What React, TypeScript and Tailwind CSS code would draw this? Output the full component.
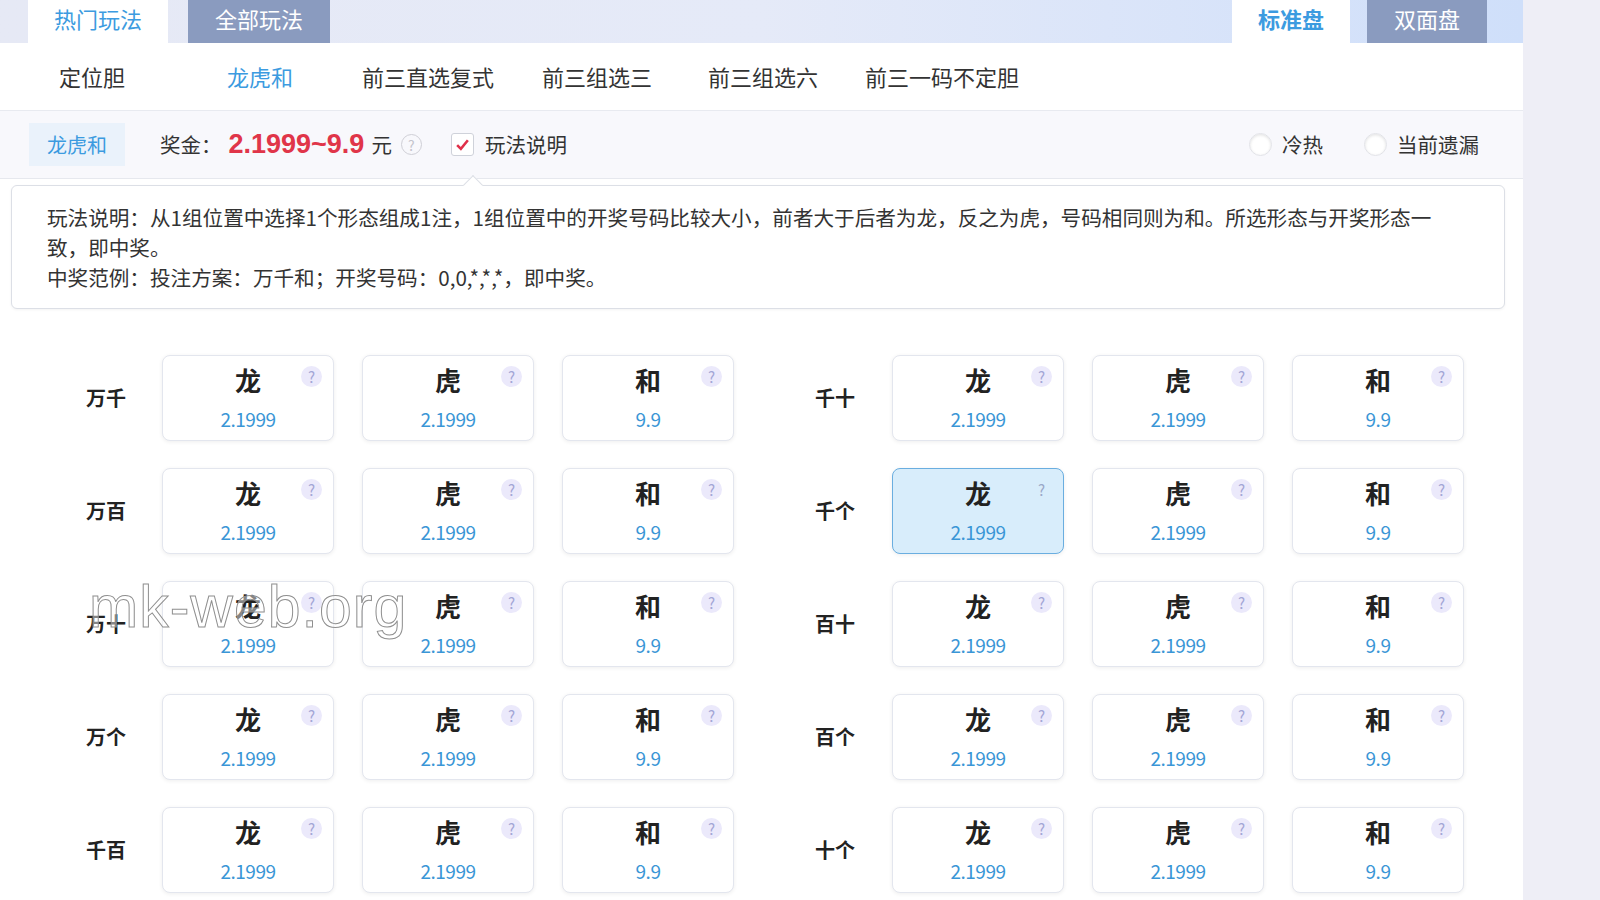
import React from "react";

const cjk = "font-['Microsoft_YaHei','Noto_Sans_CJK_SC',sans-serif]";

const subTabs = ["定位胆", "龙虎和", "前三直选复式", "前三组选三", "前三组选六", "前三一码不定胆"];
const subTabW = ["w-[168px]", "w-[135px]", "w-[180px]", "w-[166px]", "w-[157px]", "w-auto"];

const leftRows = ["万千", "万百", "万十", "万个", "千百"];
const rightRows = ["千十", "千个", "百十", "百个", "十个"];
const options = [
  { name: "龙", odds: "2.1999" },
  { name: "虎", odds: "2.1999" },
  { name: "和", odds: "9.9" },
];

function Card({ name, odds, active }: { name: string; odds: string; active?: boolean }) {
  return (
    <div
      className={`relative flex h-[86px] w-[172px] flex-col items-center rounded-[8px] border shadow-[0_1px_4px_rgba(0,0,0,0.07)] ${
        active ? "border-[#6aaee0] bg-[#d8edfb]" : "border-[#e3e6ee] bg-white"
      }`}
    >
      <div className="mt-[8px] text-[26px] leading-[32px] font-bold text-[#222]">{name}</div>
      <div className="mt-[12px] text-[19px] leading-[22px] tracking-[-0.5px] text-[#3a96d6]">{odds}</div>
      <span
        className={`absolute right-[11px] top-[10px] flex h-[21px] w-[21px] items-center justify-center rounded-full text-[15px] leading-none ${
          active ? "text-[#9aa8c8]" : "bg-[#ebe9fb] text-[#a3a6d6]"
        }`}
      >
        ?
      </span>
    </div>
  );
}

function Group({ labels, activeRow, gapRight }: { labels: string[]; activeRow?: number; gapRight: string }) {
  return (
    <div className="flex flex-col gap-[27px]">
      {labels.map((label, r) => (
        <div key={label} className="flex items-center">
          <div className={`${gapRight} w-[90px] text-center text-[20px] font-bold text-[#222]`}>{label}</div>
          <div className="flex gap-[28px]">
            {options.map((o, i) => (
              <Card key={o.name} name={o.name} odds={o.odds} active={r === activeRow && i === 0} />
            ))}
          </div>
        </div>
      ))}
    </div>
  );
}

export default function App() {
  return (
    <div className={`flex h-[900px] w-[1600px] overflow-hidden bg-[#eeeef6] ${cjk}`}>
      <div className="relative h-full w-[1523px] bg-white">
        {/* top tabs */}
        <div className="flex h-[43px] items-end bg-gradient-to-r from-[#e6e9f5] via-[#e5eaf8] to-[#cfdffa]">
          <div className="ml-[28px] flex h-[43px] w-[140px] items-center justify-center bg-white pb-[6px] text-[22px] text-[#3c9be0]">
            热门玩法
          </div>
          <div className="ml-[20px] flex h-[43px] w-[142px] items-center justify-center bg-[#8a9bbf] pb-[6px] text-[22px] text-white">
            全部玩法
          </div>
          <div className="flex-1" />
          <div className="flex h-[43px] w-[118px] items-center justify-center bg-white pb-[6px] text-[22px] font-bold text-[#3c9be0]">
            标准盘
          </div>
          <div className="ml-[17px] flex h-[43px] w-[120px] items-center justify-center bg-[#8a9bbf] pb-[6px] text-[22px] text-white">
            双面盘
          </div>
          <div className="w-[36px]" />
        </div>

        {/* sub tabs */}
        <div className="flex h-[68px] items-center border-b border-[#e8eaf0] pl-[59px]">
          {subTabs.map((t, i) => (
            <div key={t} className={`${subTabW[i]} text-[22px] ${i === 1 ? "text-[#3c9be0]" : "text-[#333]"}`}>
              {t}
            </div>
          ))}
        </div>

        {/* prize row */}
        <div className="flex h-[68px] items-center border-b border-[#e6e8ee] bg-[#f8f8fc] pl-[29px] pr-[44px] text-[20.5px]">
          <div className="flex h-[43px] w-[96px] items-center justify-center bg-[#eaf2fb] text-[20px] text-[#3c9be0]">
            龙虎和
          </div>
          <span className="ml-[35px] text-[#333]">奖金：</span>
          <span className="ml-[7px] font-['Liberation_Sans',sans-serif] text-[27px] font-bold text-[#e03549]">
            2.1999~9.9
          </span>
          <span className="ml-[7px] text-[#333]">元</span>
          <span className="ml-[9px] flex h-[21px] w-[21px] items-center justify-center rounded-full border border-[#cfcfd6] text-[14px] leading-none text-[#c4c4cc]">
            ?
          </span>
          <span className="ml-[29px] flex h-[23px] w-[23px] items-center justify-center rounded-[3px] border border-[#cfd2da] bg-white">
            <svg width="15" height="13" viewBox="0 0 14 12">
              <path d="M2 6.5 L5.5 10 L12 2" fill="none" stroke="#e0304a" strokeWidth="2.4" />
            </svg>
          </span>
          <span className="ml-[11px] text-[#333]">玩法说明</span>
          <div className="flex-1" />
          <span className="h-[23px] w-[23px] rounded-full border border-[#e2e3e8] bg-white shadow-[inset_0_1px_3px_rgba(0,0,0,0.12)]" />
          <span className="ml-[10px] text-[#333]">冷热</span>
          <span className="ml-[41px] h-[23px] w-[23px] rounded-full border border-[#e2e3e8] bg-white shadow-[inset_0_1px_3px_rgba(0,0,0,0.12)]" />
          <span className="ml-[10px] text-[#333]">当前遗漏</span>
        </div>

        {/* description */}
        <div className="relative ml-[11px] mt-[6px] w-[1494px] rounded-[6px] border border-[#dcdfe6] bg-white pl-[35px] pr-[40px] pt-[16px] pb-[16px] shadow-[0_1px_3px_rgba(0,0,0,0.05)]">
          <span className="absolute -top-[8px] left-[454px] h-[14px] w-[14px] rotate-45 border-l border-t border-[#dcdfe6] bg-white" />
          <p className="text-[20.6px] leading-[30px] text-[#333]">
            玩法说明：从1组位置中选择1个形态组成1注，1组位置中的开奖号码比较大小，前者大于后者为龙，反之为虎，号码相同则为和。所选形态与开奖形态一致，即中奖。
            <br />
            中奖范例：投注方案：万千和；开奖号码：0,0,*,*,*，即中奖。
          </p>
        </div>

        {/* grid */}
        <div className="mt-[46px] flex pl-[61px]">
          <Group labels={leftRows} gapRight="mr-[11px]" />
          <div className="w-[56px]" />
          <Group labels={rightRows} activeRow={1} gapRight="mr-[12px]" />
        </div>

        {/* watermark */}
        <div className="pointer-events-none absolute left-[89px] top-[578px] font-['Liberation_Sans',sans-serif] text-[59px] leading-none tracking-[1px] text-[rgba(255,255,255,0.45)] [-webkit-text-stroke:1px_#8f8f8f]">
          mk-web.org
        </div>
      </div>
    </div>
  );
}
